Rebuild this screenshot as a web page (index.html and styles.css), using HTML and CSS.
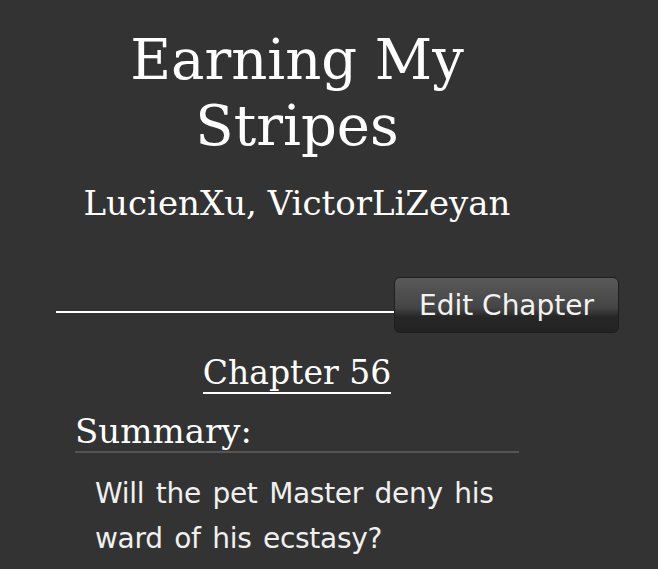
FILE: index.html
```html
<!DOCTYPE html>
<html>
<head>
<meta charset="utf-8">
<link rel="stylesheet" href="styles.css">
</head>
<body>
<div class="page">
  <h1 class="title">Earning My<br>Stripes</h1>
  <h2 class="authors">LucienXu, VictorLiZeyan</h2>
  <div class="toolbar">
    <div class="rule"></div>
    <button class="edit-btn">Edit Chapter</button>
  </div>
  <h3 class="chapter"><span class="chapter-link">Chapter 56</span></h3>
  <div class="summary">
    <h4 class="summary-head">Summary:</h4>
    <p class="summary-text">Will the pet Master deny his ward of his ecstasy?</p>
  </div>
</div>
</body>
</html>
```
FILE: styles.css
```css
html, body {
  margin: 0;
  padding: 0;
  background: #333333;
  color: #ffffff;
}
.page {
  width: 482px;
  margin-left: 56px;
  font-family: "DejaVu Serif", serif;
}
.title {
  margin: 27px 0 0 0;
  font-size: 56px;
  font-weight: normal;
  line-height: 66px;
  text-align: center;
}
.authors {
  margin: 24px 0 0 0;
  font-size: 34px;
  font-weight: normal;
  line-height: 40px;
  text-align: center;
}
.toolbar {
  display: flex;
  align-items: flex-end;
  margin-top: 54px;
  width: 563px;
}
.rule {
  flex: 1;
  height: 2px;
  margin-bottom: 20px;
  background: #ffffff;
}
.edit-btn {
  box-sizing: border-box;
  width: 225px;
  height: 56px;
  border: 1px solid #1e1e1e;
  border-radius: 6px;
  background: linear-gradient(#595959 0%, #454545 55%, #262626 72%, #232323 100%);
  color: #f2f2f2;
  font-family: "DejaVu Sans", sans-serif;
  font-size: 28px;
  padding: 0;
}
.chapter {
  margin: 18px 0 0 0;
  font-size: 33px;
  font-weight: normal;
  line-height: 44px;
  text-align: center;
}
.chapter-link {
  border-bottom: 2px solid #ffffff;
}
.summary {
  margin: 16px 19px 0 19px;
}
.summary-head {
  margin: 0;
  font-size: 34px;
  font-weight: normal;
  line-height: 40px;
  border-bottom: 2px solid #555555;
}
.summary-text {
  margin: 18px 0 0 20px;
  font-family: "DejaVu Sans", sans-serif;
  font-size: 28px;
  letter-spacing: -0.3px;
  word-spacing: 3px;
  line-height: 45px;
  color: #f0f0f0;
}
```
